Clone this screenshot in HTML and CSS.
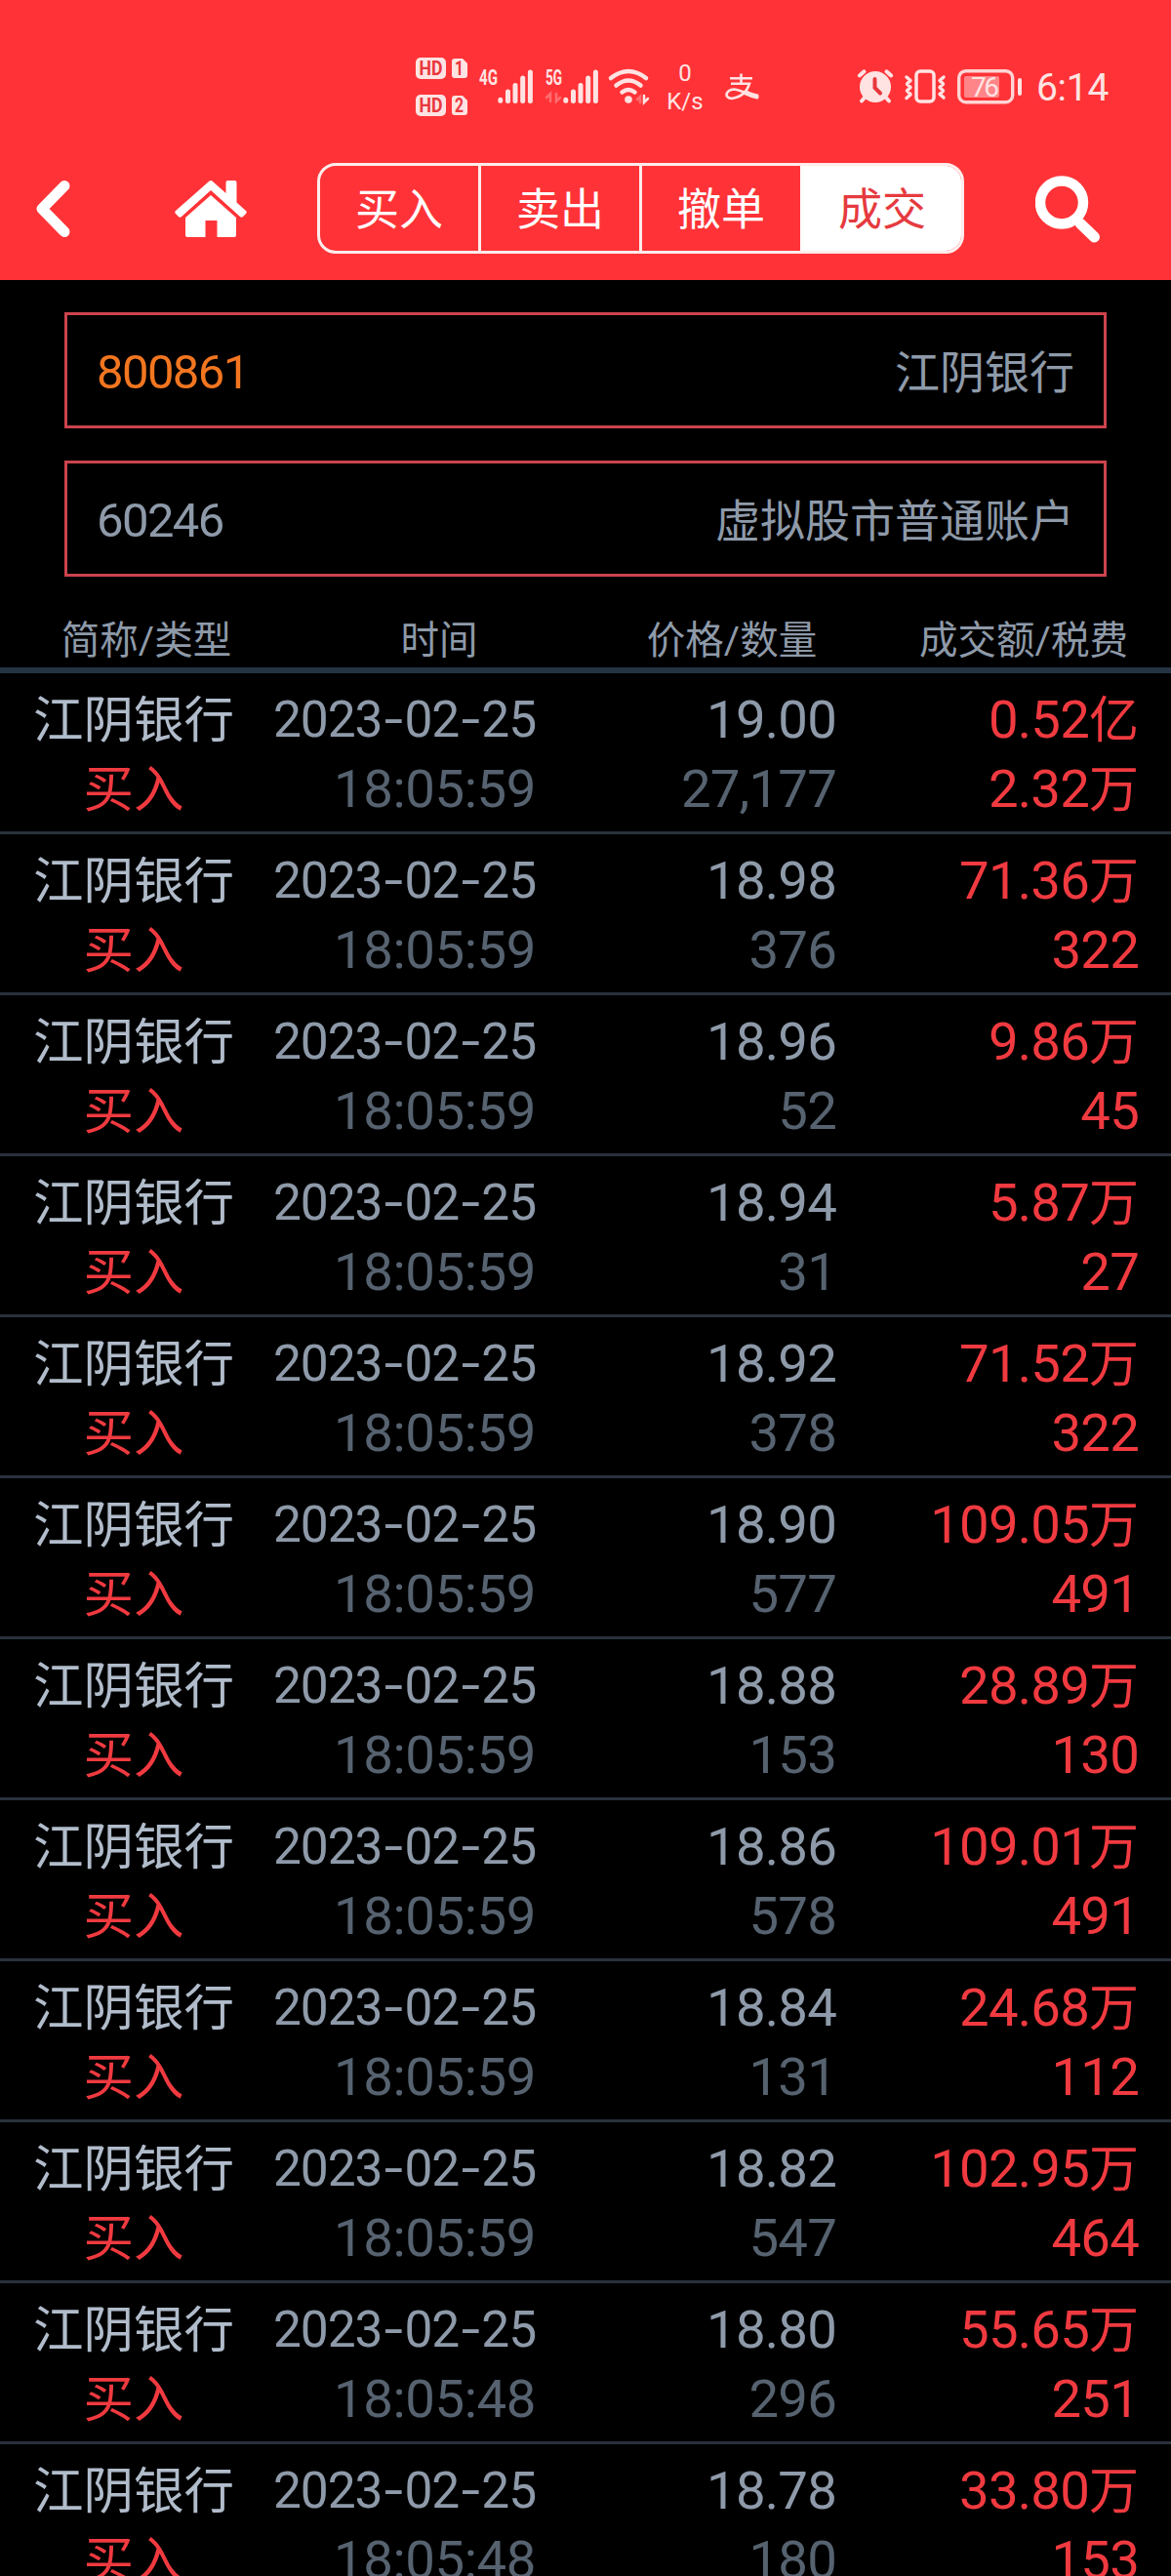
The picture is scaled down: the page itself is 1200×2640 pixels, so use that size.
FILE: index.html
```html
<!DOCTYPE html>
<html lang="zh-CN">
<head>
    <meta charset="UTF-8">
    <meta name="viewport" content="width=device-width, initial-scale=1.0">
    <title>成交</title>
    <link rel="stylesheet" href="styles.css">
</head>
<body>
    <header class="header">
        <div class="status-bar">
            <div class="status-left">
                <svg class="icon-hd" width="52" height="62" viewBox="0 0 52 62">
                    <rect x="0" y="1" width="31" height="22" rx="5"/>
                    <path d="M40 2h8l5 5v12q0 3-3 3H40q-3 0-3-3V5q0-3 3-3z"/>
                    <rect x="0" y="39" width="31" height="22" rx="5"/>
                    <path d="M40 40h8l5 5v12q0 3-3 3H40q-3 0-3-3V43q0-3 3-3z"/>
                    <text x="3.5" y="19" textLength="24" lengthAdjust="spacingAndGlyphs">HD</text>
                    <text x="40" y="19" textLength="9" lengthAdjust="spacingAndGlyphs">1</text>
                    <text x="3.5" y="57" textLength="24" lengthAdjust="spacingAndGlyphs">HD</text>
                    <text x="40" y="57" textLength="9" lengthAdjust="spacingAndGlyphs">2</text>
                </svg>
                <svg class="icon-signal" width="55" height="62" viewBox="0 0 55 62">
                    <text x="0" y="29" textLength="19" lengthAdjust="spacingAndGlyphs">4G</text>
                    <path d="M21.8 44.2v1M29.5 36v9.5M37 29.5v16M44.7 22v23.5M52.4 16v29.5"/>
                </svg>
                <svg class="icon-signal" width="54" height="62" viewBox="0 0 54 62">
                    <text x="0" y="29" textLength="17" lengthAdjust="spacingAndGlyphs">5G</text>
                    <path class="faint" d="M1 42l4-4v8M11 38v8l4-4"/>
                    <path d="M20.8 44.2v1M28.5 36v9.5M36 29.5v16M43.7 22v23.5M51.4 16v29.5"/>
                </svg>
                <svg class="icon-wifi" width="42" height="62" viewBox="0 0 42 62">
                    <path d="M2 22Q20 8 38 22M7.5 29.5Q20 19.5 32.5 29.5M13.5 36.5Q20 31.5 26.5 36.5"/>
                    <circle cx="20" cy="44" r="3.8"/>
                    <path class="faint" d="M29 44l3-3v6"/>
                    <path class="arrow" d="M36 40v7l4-4"/>
                </svg>
                <div class="net-speed">
                    <span>0</span>
                    <span>K/s</span>
                </div>
                <svg class="icon-pay" width="36" height="62" viewBox="0 0 36 62">
                    <path d="M5 22.2H28M16.5 17.5V27M6 27.7H25Q21 41 7 43Q1.500 42.500 1.500 38.500Q3 34 9 33.500C16 34 25 40 34.500 41.500"/>
                    <path class="tail" d="M20 36.500Q27 40 34 41.200"/>
                </svg>
            </div>
            <div class="status-right">
                <svg class="icon-alarm" width="36" height="62" viewBox="0 0 36 62">
                    <circle cx="18" cy="31" r="16"/>
                    <path class="line" d="M1.800 19.500L6.500 15.300M34.200 19.500L29.500 15.300M7 42L4 45.500M29 42L32 45.500"/>
                    <path class="hands" d="M17.500 23v9l5.500 5.500"/>
                </svg>
                <svg class="icon-vibrate" width="42" height="62" viewBox="0 0 42 62">
                    <rect x="12" y="15" width="18" height="31" rx="4"/>
                    <path d="M2 21l4 3.500-3.500 3.500 3.500 3.500-3.500 3.500 3.500 3.500M2 42.500l4-3.500M40 21l-4 3.500 3.500 3.500-3.500 3.500 3.500 3.500-3.500 3.500 4 3.500"/>
                </svg>
                <svg class="icon-battery" width="66" height="62" viewBox="0 0 66 62">
                    <rect class="level" x="7" y="20" width="36" height="22" rx="2"/>
                    <rect class="case" x="1.700" y="14.700" width="55" height="32" rx="7"/>
                    <path class="cap" d="M64 24v14"/>
                    <text x="14" y="41" textLength="29">76</text>
                </svg>
                <span class="clock">6:14</span>
            </div>
        </div>

        <nav class="nav">
            <svg class="icon-back" width="36" height="60" viewBox="0 0 36 60">
                <path d="M30 6.500L7 30l23 23.500"/>
            </svg>
            <svg class="icon-home" width="74" height="60" viewBox="0 0 74 60">
                <path d="M35 2q2-2 4 0L52.500 14V3q0-2 2-2h7q2 0 2 2v20.500L73 32q1.500 1.500 0 3l-3 3q-1.500 1.500-3 0L37 11 7 38q-1.500 1.500-3 0l-3-3q-1.500-1.500 0-3z"/>
                <path d="M37 16L63 39v18q0 2-2 2H43.500V42h-12v17H13q-2 0-2-2V39z"/>
            </svg>
            <div class="tabs">
                <div class="tab">买入</div>
                <div class="tab">卖出</div>
                <div class="tab">撤单</div>
                <div class="tab active">成交</div>
            </div>
            <svg class="icon-search" width="68" height="70" viewBox="0 0 68 70">
                <circle cx="27" cy="28.500" r="22"/>
                <path d="M46 50L60.500 64"/>
            </svg>
        </nav>
    </header>

    <div class="fields">
        <div class="field">
            <span class="code">800861</span>
            <span class="label">江阴银行</span>
        </div>
        <div class="field">
            <span class="account">60246</span>
            <span class="label">虚拟股市普通账户</span>
        </div>
    </div>

    <div class="table-head">
        <div>简称/类型</div>
        <div>时间</div>
        <div>价格/数量</div>
        <div>成交额/税费</div>
    </div>

    <main class="list">
        <div class="row">
            <div class="name">江阴银行<b>买入</b></div>
            <div class="time"><span>2023<i>-</i>02<i>-</i>25</span><em>18:05:59</em></div>
            <div class="price">19.00<em>27,177</em></div>
            <div class="amount"><span>0.52<u>亿</u></span><span>2.32<u>万</u></span></div>
        </div>
        <div class="row">
            <div class="name">江阴银行<b>买入</b></div>
            <div class="time"><span>2023<i>-</i>02<i>-</i>25</span><em>18:05:59</em></div>
            <div class="price">18.98<em>376</em></div>
            <div class="amount"><span>71.36<u>万</u></span><span>322</span></div>
        </div>
        <div class="row">
            <div class="name">江阴银行<b>买入</b></div>
            <div class="time"><span>2023<i>-</i>02<i>-</i>25</span><em>18:05:59</em></div>
            <div class="price">18.96<em>52</em></div>
            <div class="amount"><span>9.86<u>万</u></span><span>45</span></div>
        </div>
        <div class="row">
            <div class="name">江阴银行<b>买入</b></div>
            <div class="time"><span>2023<i>-</i>02<i>-</i>25</span><em>18:05:59</em></div>
            <div class="price">18.94<em>31</em></div>
            <div class="amount"><span>5.87<u>万</u></span><span>27</span></div>
        </div>
        <div class="row">
            <div class="name">江阴银行<b>买入</b></div>
            <div class="time"><span>2023<i>-</i>02<i>-</i>25</span><em>18:05:59</em></div>
            <div class="price">18.92<em>378</em></div>
            <div class="amount"><span>71.52<u>万</u></span><span>322</span></div>
        </div>
        <div class="row">
            <div class="name">江阴银行<b>买入</b></div>
            <div class="time"><span>2023<i>-</i>02<i>-</i>25</span><em>18:05:59</em></div>
            <div class="price">18.90<em>577</em></div>
            <div class="amount"><span>109.05<u>万</u></span><span>491</span></div>
        </div>
        <div class="row">
            <div class="name">江阴银行<b>买入</b></div>
            <div class="time"><span>2023<i>-</i>02<i>-</i>25</span><em>18:05:59</em></div>
            <div class="price">18.88<em>153</em></div>
            <div class="amount"><span>28.89<u>万</u></span><span>130</span></div>
        </div>
        <div class="row">
            <div class="name">江阴银行<b>买入</b></div>
            <div class="time"><span>2023<i>-</i>02<i>-</i>25</span><em>18:05:59</em></div>
            <div class="price">18.86<em>578</em></div>
            <div class="amount"><span>109.01<u>万</u></span><span>491</span></div>
        </div>
        <div class="row">
            <div class="name">江阴银行<b>买入</b></div>
            <div class="time"><span>2023<i>-</i>02<i>-</i>25</span><em>18:05:59</em></div>
            <div class="price">18.84<em>131</em></div>
            <div class="amount"><span>24.68<u>万</u></span><span>112</span></div>
        </div>
        <div class="row">
            <div class="name">江阴银行<b>买入</b></div>
            <div class="time"><span>2023<i>-</i>02<i>-</i>25</span><em>18:05:59</em></div>
            <div class="price">18.82<em>547</em></div>
            <div class="amount"><span>102.95<u>万</u></span><span>464</span></div>
        </div>
        <div class="row">
            <div class="name">江阴银行<b>买入</b></div>
            <div class="time"><span>2023<i>-</i>02<i>-</i>25</span><em>18:05:48</em></div>
            <div class="price">18.80<em>296</em></div>
            <div class="amount"><span>55.65<u>万</u></span><span>251</span></div>
        </div>
        <div class="row">
            <div class="name">江阴银行<b>买入</b></div>
            <div class="time"><span>2023<i>-</i>02<i>-</i>25</span><em>18:05:48</em></div>
            <div class="price">18.78<em>180</em></div>
            <div class="amount"><span>33.80<u>万</u></span><span>153</span></div>
        </div>
    </main>
</body>
</html>
```
FILE: styles.css
```css
* {
    box-sizing: border-box;
}

body {
    margin: 0;
    width: 1200px;
    height: 2640px;
    overflow: hidden;
    background-color: #000;
    font-family: Roboto, 'Noto Sans CJK SC', sans-serif;
    color: #8e9aa9;
}

/* header */
.header {
    height: 287px;
    background-color: #ff3337;
}

.status-bar {
    display: flex;
    justify-content: space-between;
    height: 167px;
    padding: 58px 64px 0 426px;
    color: #ffe3e3;
}

.status-bar svg {
    display: block;
    overflow: visible;
    fill: #ffe3e3;
}

.status-left,
.status-right {
    display: flex;
    height: 62px;
}

.icon-hd text {
    fill: #e8373c;
    font-size: 20px;
    font-weight: bold;
}

.icon-signal {
    margin-left: 13px;
}

.icon-signal text {
    font-size: 22px;
    font-weight: bold;
}

.icon-signal path {
    stroke: #ffe3e3;
    stroke-width: 5;
    stroke-linecap: round;
    fill: none;
}

.status-bar .faint {
    stroke: #ff6d70;
    stroke-width: 2.5;
}

.icon-wifi {
    margin-left: 11px;
}

.icon-wifi path {
    stroke: #ffe3e3;
    stroke-width: 4.5;
    stroke-linecap: round;
    fill: none;
}

.status-bar .arrow {
    stroke-width: 2.5;
}

.net-speed {
    display: flex;
    flex-direction: column;
    align-items: center;
    width: 38px;
    margin-left: 17px;
    padding-top: 3px;
    font-size: 24px;
    line-height: 29px;
}

.icon-pay {
    margin-left: 22px;
}

.icon-pay path {
    fill: none;
    stroke: #ffe3e3;
    stroke-width: 2.6;
}

.icon-pay .tail {
    stroke-width: 5;
}

.icon-alarm .line {
    stroke: #ffe3e3;
    stroke-width: 4;
    stroke-linecap: round;
}

.icon-alarm .hands {
    fill: none;
    stroke: #e8373c;
    stroke-width: 4;
    stroke-linecap: round;
}

.icon-vibrate {
    margin-left: 12px;
}

.icon-vibrate rect,
.icon-vibrate path {
    fill: none;
    stroke: #ffe3e3;
    stroke-width: 3.5;
    stroke-linecap: round;
    stroke-linejoin: round;
}

.icon-battery {
    margin-left: 12px;
}

.icon-battery .level {
    fill: #ff8588;
}

.icon-battery .case {
    fill: none;
    stroke: #ffd5d5;
    stroke-width: 3.4;
}

.icon-battery .cap {
    stroke: #ffe3e3;
    stroke-width: 4;
    stroke-linecap: round;
}

.icon-battery text {
    font-size: 28px;
}

.clock {
    width: 74px;
    margin-left: 15px;
    font-size: 39px;
    line-height: 65px;
    letter-spacing: -0.3px;
    white-space: nowrap;
}

.nav {
    display: flex;
    align-items: center;
    height: 93px;
    padding-left: 36px;
}

.nav svg {
    display: block;
    fill: #fff;
}

.icon-back path {
    fill: none;
    stroke: #fff;
    stroke-width: 11;
    stroke-linecap: round;
    stroke-linejoin: round;
}

.icon-home {
    margin-left: 107px;
}

.tabs {
    display: flex;
    width: 663px;
    height: 93px;
    margin-left: 72px;
    border: 3px solid #ffecec;
    border-radius: 19px;
    overflow: hidden;
}

.tab {
    flex: 1;
    padding-top: 4px;
    border-left: 3px solid #ffecec;
    font-size: 45px;
    line-height: 84px;
    text-align: center;
    color: #fff;
}

.tab:first-child {
    border-left: none;
}

.tab.active {
    background-color: #fff;
    border-color: #fff;
    color: #e63a3f;
}

.icon-search {
    margin-left: 73px;
}

.icon-search circle {
    fill: none;
    stroke: #fff;
    stroke-width: 10.5;
}

.icon-search path {
    stroke: #fff;
    stroke-width: 11;
    stroke-linecap: round;
}

/* stock and account */
.fields {
    display: flex;
    flex-direction: column;
    gap: 33px;
    padding: 33px 66px 0;
}

.field {
    display: flex;
    justify-content: space-between;
    height: 119px;
    padding: 0 31px 0 30px;
    border: 3px solid #cb434d;
    font-size: 49px;
    line-height: 118px;
}

.code,
.account {
    letter-spacing: -1.6px;
}

.code {
    color: #f27620;
}

.label {
    margin-right: -1px;
    font-size: 46px;
    line-height: 119px;
}

/* trades */
.table-head {
    display: grid;
    grid-template-columns: 300px 300px 300px 298px;
    height: 99px;
    padding-top: 38px;
    border-bottom: 6px solid #243442;
    font-size: 39.5px;
    line-height: 56px;
    text-align: center;
}

.row {
    display: grid;
    grid-template-columns: 274px 275px 308px 310px;
    height: 165px;
    padding-top: 12px;
    border-bottom: 3px solid #29323b;
    font-size: 54.5px;
    line-height: 71px;
    letter-spacing: -0.8px;
    text-align: right;
}

.row b,
.row em,
.row span {
    display: block;
    font-style: normal;
    font-weight: normal;
}

.row em {
    color: #56626f;
}

.name {
    padding-top: 1px;
    font-size: 51.5px;
    letter-spacing: 0;
    text-align: center;
    color: #b1bccb;
}

.name b {
    color: #f03a40;
}

.time span {
    font-size: 51.5px;
    letter-spacing: -1.1px;
}

.time em {
    letter-spacing: -0.4px;
}

/* wide hyphen between the date parts */
.time i {
    display: inline-block;
    margin: 0 5px;
    font-style: normal;
    transform: scaleX(1.35);
}

.amount {
    color: #f03a40;
}

.amount u {
    font-size: 51px;
    letter-spacing: 0;
    line-height: 1;
    text-decoration: none;
}
```
